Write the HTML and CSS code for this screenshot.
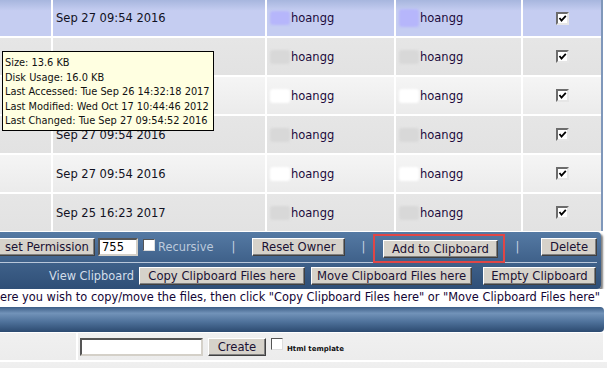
FILE: index.html
```html
<!DOCTYPE html>
<html>
<head>
    <title>File Manager</title>
    <meta charset="utf-8">
    <link rel="stylesheet" href="styles.css">
</head>
<body>
<div class="page">
    <div class="files">
        <div class="row selected">
            <div class="cell"></div>
            <div class="cell date">Sep 27 09:54 2016</div>
            <div class="cell user"><span class="blot"></span>hoangg</div>
            <div class="cell user"><span class="blot tall"></span>hoangg</div>
            <div class="cell pick"><span class="check"><svg viewBox="0 0 9 9"><path d="M1.5 4 L3.5 6.5 L7.8 1.8"/></svg></span></div>
        </div>
        <div class="row dark">
            <div class="cell"></div>
            <div class="cell date"></div>
            <div class="cell user"><span class="blot"></span>hoangg</div>
            <div class="cell user"><span class="blot"></span>hoangg</div>
            <div class="cell pick"><span class="check"><svg viewBox="0 0 9 9"><path d="M1.5 4 L3.5 6.5 L7.8 1.8"/></svg></span></div>
        </div>
        <div class="row light">
            <div class="cell"></div>
            <div class="cell date"></div>
            <div class="cell user"><span class="blot"></span>hoangg</div>
            <div class="cell user"><span class="blot"></span>hoangg</div>
            <div class="cell pick"><span class="check"><svg viewBox="0 0 9 9"><path d="M1.5 4 L3.5 6.5 L7.8 1.8"/></svg></span></div>
        </div>
        <div class="row dark">
            <div class="cell"></div>
            <div class="cell date">Sep 27 09:54 2016</div>
            <div class="cell user"><span class="blot"></span>hoangg</div>
            <div class="cell user"><span class="blot"></span>hoangg</div>
            <div class="cell pick"><span class="check"><svg viewBox="0 0 9 9"><path d="M1.5 4 L3.5 6.5 L7.8 1.8"/></svg></span></div>
        </div>
        <div class="row light">
            <div class="cell"></div>
            <div class="cell date">Sep 27 09:54 2016</div>
            <div class="cell user"><span class="blot"></span>hoangg</div>
            <div class="cell user"><span class="blot"></span>hoangg</div>
            <div class="cell pick"><span class="check"><svg viewBox="0 0 9 9"><path d="M1.5 4 L3.5 6.5 L7.8 1.8"/></svg></span></div>
        </div>
        <div class="row dark">
            <div class="cell"></div>
            <div class="cell date">Sep 25 16:23 2017</div>
            <div class="cell user"><span class="blot"></span>hoangg</div>
            <div class="cell user"><span class="blot"></span>hoangg</div>
            <div class="cell pick"><span class="check"><svg viewBox="0 0 9 9"><path d="M1.5 4 L3.5 6.5 L7.8 1.8"/></svg></span></div>
        </div>
    </div>

    <div class="tooltip">
        <div>Size: 13.6 KB</div>
        <div>Disk Usage: 16.0 KB</div>
        <div>Last Accessed: Tue Sep 26 14:32:18 2017</div>
        <div>Last Modified: Wed Oct 17 10:44:46 2012</div>
        <div>Last Changed: Tue Sep 27 09:54:52 2016</div>
    </div>

    <div class="toolbar">
        <div class="tool-row actions">
            <button class="btn perm">set Permission</button>
            <input class="field mode" type="text" value="755">
            <span class="box"></span>
            <span class="label recursive">Recursive</span>
            <span class="pipe">|</span>
            <button class="btn owner">Reset Owner</button>
            <span class="pipe p2">|</span>
            <span class="highlight"><button class="btn add">Add to Clipboard</button></span>
            <span class="pipe p3">|</span>
            <button class="btn delete">Delete</button>
        </div>
        <div class="tool-row clipboard">
            <span class="label view">View Clipboard</span>
            <button class="btn copy">Copy Clipboard Files here</button>
            <button class="btn move">Move Clipboard Files here</button>
            <button class="btn empty">Empty Clipboard</button>
        </div>
    </div>

    <div class="notice">ere you wish to copy/move the files, then click "Copy Clipboard Files here" or "Move Clipboard Files here"</div>

    <div class="bar"></div>

    <div class="create-row">
        <div class="cell"></div>
        <div class="cell create">
            <input class="field name" type="text">
            <button class="btn make">Create</button>
            <span class="box small"></span>
            <span class="tiny">Html template</span>
        </div>
    </div>
    <div class="last-row"></div>
</div>
</body>
</html>
```

FILE: styles.css
```css
body {
    margin: 0;
    padding: 0;
    background-color: white;
    font-family: "DejaVu Sans", Verdana, sans-serif;
    font-size: 11.5px;
    overflow: hidden;
}

.page {
    position: relative;
    width: 607px;
    height: 368px;
    overflow: hidden;
}

/* file list */
.files {
    display: flex;
    flex-direction: column;
    gap: 2px;
    width: 601px;
    border-right: 2px solid #7f97ba;
}

.row {
    display: grid;
    grid-template-columns: 51px 212px 127px 125px 78px;
    column-gap: 2px;
    height: 37px;
}

.row.selected {
    height: 36px;
}

.cell {
    display: flex;
    align-items: center;
}

.selected .cell {
    background: linear-gradient(#a7b6de, #c5cdf1 30%);
}

.dark .cell {
    background: linear-gradient(#e6e6e6, #e2e2e2);
}

.light .cell {
    background: linear-gradient(#f5f5f5, #ebebeb);
}

.date {
    padding-left: 3px;
    color: #111122;
}

.user {
    padding-left: 3px;
    color: #1c0b3c;
}

.blot {
    width: 20px;
    height: 14px;
    margin-right: 1px;
    border-radius: 3px;
    background-color: #d8d8d8;
    filter: blur(1px);
}

.light .blot {
    background-color: #ffffff;
}

.selected .blot {
    background-color: #b6b6fb;
}

.blot.tall {
    height: 18px;
}

.pick {
    justify-content: center;
}

.check {
    width: 9px;
    height: 9px;
    border: 2px solid;
    border-color: #6c6c6c #e6e6e6 #e6e6e6 #6c6c6c;
    background-color: white;
}

.check svg {
    display: block;
    width: 9px;
    height: 9px;
}

.check path {
    fill: none;
    stroke: black;
    stroke-width: 1.8;
}

/* hover tooltip */
.tooltip {
    position: absolute;
    left: 2px;
    top: 51px;
    width: 206px;
    padding: 4px 2px 1px 2px;
    background-color: #ffffe1;
    border: 1px solid black;
    font-family: "DejaVu Sans Condensed", "DejaVu Sans", sans-serif;
    font-size: 10.9px;
    line-height: 14.6px;
    color: #111;
}

/* toolbar */
.toolbar {
    width: 601px;
    background: linear-gradient(#557aa4, #40628b 50%, #2f4f77);
    border-radius: 0 4px 4px 0;
    box-shadow: 2px 2px 2px rgba(0, 0, 0, 0.5);
    margin-top: 1px;
}

.tool-row {
    display: flex;
    align-items: center;
}

.actions {
    height: 30px;
    margin-right: 4px;
    border-bottom: 1px solid #b9c7da;
}

.clipboard {
    height: 26px;
    justify-content: flex-end;
    padding-right: 5px;
}

.btn {
    height: 18px;
    padding: 0;
    font-family: "DejaVu Sans", Verdana, sans-serif;
    font-size: 11.6px;
    color: #1a1133;
    background-color: #d6d2ca;
    border: 1px solid;
    border-color: #ffffff #404040 #404040 #ffffff;
    box-shadow: inset -1px -1px #808080;
    border-radius: 0;
    text-align: center;
    white-space: nowrap;
}

.field {
    height: 18px;
    box-sizing: border-box;
    padding: 0 2px;
    font-family: "DejaVu Sans", Verdana, sans-serif;
    font-size: 11.5px;
    border: 2px solid;
    border-color: #555 #d4d0c8 #d4d0c8 #555;
    background-color: white;
}

.perm {
    margin-left: -2px;
    width: 97px;
    padding-left: 6px;
    text-align: left;
}

.mode {
    width: 40px;
    margin-left: 3px;
}

.box {
    width: 12px;
    height: 12px;
    box-sizing: border-box;
    margin-left: 5px;
    margin-top: -5px;
    border: 1px solid;
    border-color: #555 #ddd #ddd #555;
    background-color: white;
}

.label {
    color: #bccadc;
    font-size: 11.4px;
}

.recursive {
    width: 72px;
    margin-left: 3px;
}

.pipe {
    width: 7px;
    text-align: center;
    color: #c5d2e2;
}

.owner {
    width: 93px;
    margin-left: 15px;
}

.p2 {
    margin-left: 15px;
}

.highlight {
    position: relative;
    align-self: flex-start;
    margin-top: 2px;
    margin-left: 6px;
    width: 132px;
    height: 29px;
    box-sizing: border-box;
    padding: 4px 0 0 8px;
    border: 2px solid #e04646;
}

.add {
    width: 115px;
}

.p3 {
    margin-left: 9px;
}

.delete {
    width: 56px;
    margin-left: 20px;
}

.view {
    color: #d3deea;
    margin-right: 5px;
}

.copy {
    width: 166px;
}

.move {
    width: 161px;
    margin-left: 6px;
}

.empty {
    width: 113px;
    margin-left: 11px;
}

/* hint text */
.notice {
    height: 17px;
    line-height: 17px;
    white-space: nowrap;
    font-size: 11.4px;
    color: #120535;
    background-color: white;
}

.bar {
    width: 604px;
    height: 25px;
    margin-top: 1px;
    border-radius: 0 4px 4px 0;
    background: linear-gradient(#3c5e86, #7293b9 25%, #4e719a 60%, #2c4a70);
}

.create-row {
    display: grid;
    grid-template-columns: 76px 525px;
    column-gap: 2px;
    height: 27px;
    margin-top: 1px;
}

.create-row .cell,
.last-row {
    background: linear-gradient(#f0f0f0, #ececec);
}

.create {
    padding-left: 2px;
}

.name {
    width: 123px;
}

.make {
    width: 58px;
    margin-left: 5px;
}

.box.small {
    margin-left: 5px;
}

.tiny {
    margin-left: 4px;
    margin-top: 4px;
    font-size: 7px;
    font-weight: bold;
    color: #111;
}

.last-row {
    height: 10px;
    margin-top: 2px;
}
```
